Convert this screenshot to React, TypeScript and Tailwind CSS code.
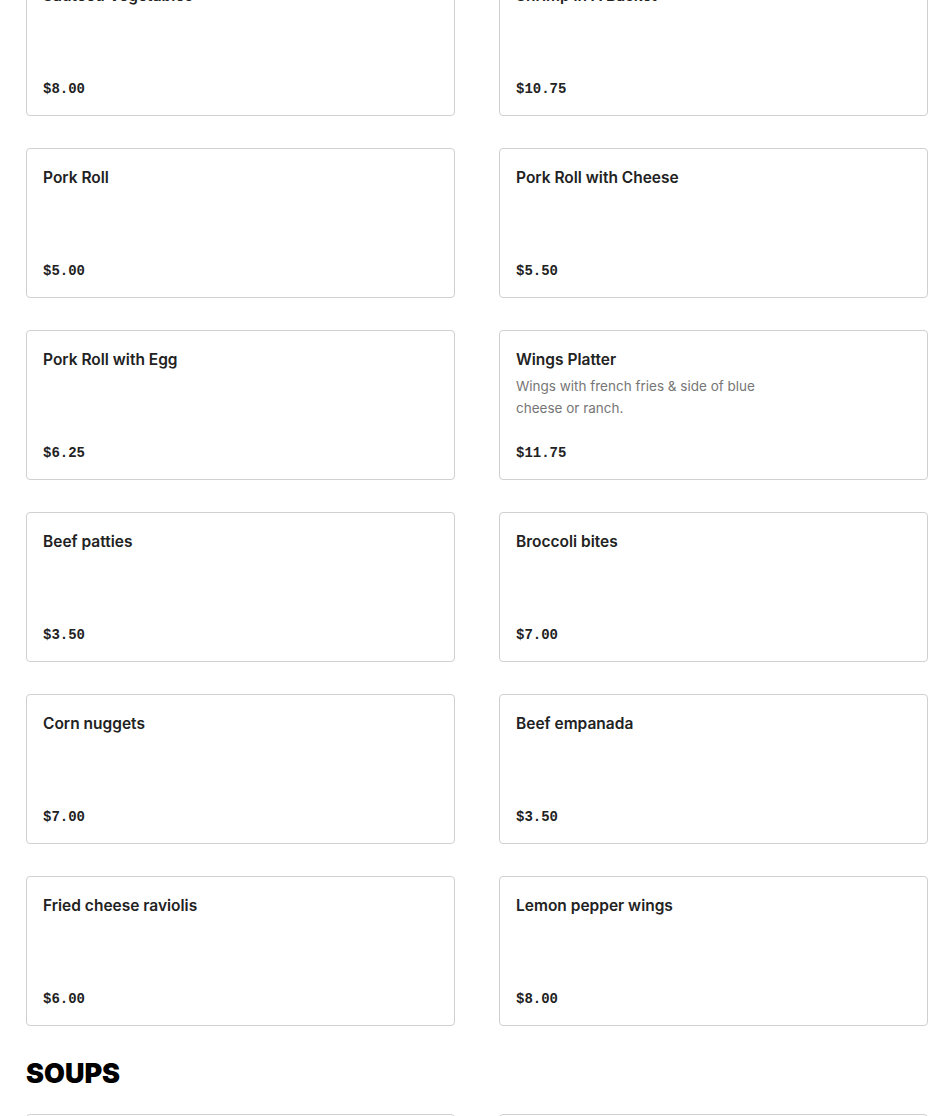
type Item = { name: string; price: string; desc?: string };

const appetizers: Item[] = [
  { name: "Sautéed Vegetables", price: "$8.00" },
  { name: "Shrimp in A Basket", price: "$10.75" },
  { name: "Pork Roll", price: "$5.00" },
  { name: "Pork Roll with Cheese", price: "$5.50" },
  { name: "Pork Roll with Egg", price: "$6.25" },
  {
    name: "Wings Platter",
    price: "$11.75",
    desc: "Wings with french fries & side of blue cheese or ranch.",
  },
  { name: "Beef patties", price: "$3.50" },
  { name: "Broccoli bites", price: "$7.00" },
  { name: "Corn nuggets", price: "$7.00" },
  { name: "Beef empanada", price: "$3.50" },
  { name: "Fried cheese raviolis", price: "$6.00" },
  { name: "Lemon pepper wings", price: "$8.00" },
];

const soups: Item[] = [
  { name: "Chicken Noodle Soup", price: "$6.00" },
  { name: "Seafood Gumbo", price: "$9.50" },
];

function MenuCard({ item }: { item: Item }) {
  return (
    <div className="h-[150px] flex flex-col justify-between border border-[#d0d0d0] rounded-[4px] bg-white px-4 pt-[17px] pb-4">
      <div>
        <h3 className="text-[15.5px] leading-6 font-semibold text-[#222]">
          {item.name}
        </h3>
        {item.desc && (
          <p className="mt-[3px] max-w-[270px] text-[13.5px] leading-[22px] text-[#767676]">
            {item.desc}
          </p>
        )}
      </div>
      <p className="font-['Liberation_Mono',monospace] font-bold text-[14px] leading-5 text-[#222]">
        {item.price}
      </p>
    </div>
  );
}

export default function App() {
  return (
    <div className="min-h-screen bg-white font-['Inter',sans-serif] overflow-hidden">
      <div className="pl-[26px] pr-[22px] -mt-[34px]">
        <div className="grid grid-cols-2 gap-x-[44px] gap-y-[32px]">
          {appetizers.map((item) => (
            <MenuCard key={item.name} item={item} />
          ))}
        </div>

        {/* Soups */}
        <h2 className="pt-[32px] pb-[24px] text-[27px] leading-8 font-black text-black">
          SOUPS
        </h2>
        <div className="grid grid-cols-2 gap-x-[44px] gap-y-[32px]">
          {soups.map((item) => (
            <MenuCard key={item.name} item={item} />
          ))}
        </div>
      </div>
    </div>
  );
}
